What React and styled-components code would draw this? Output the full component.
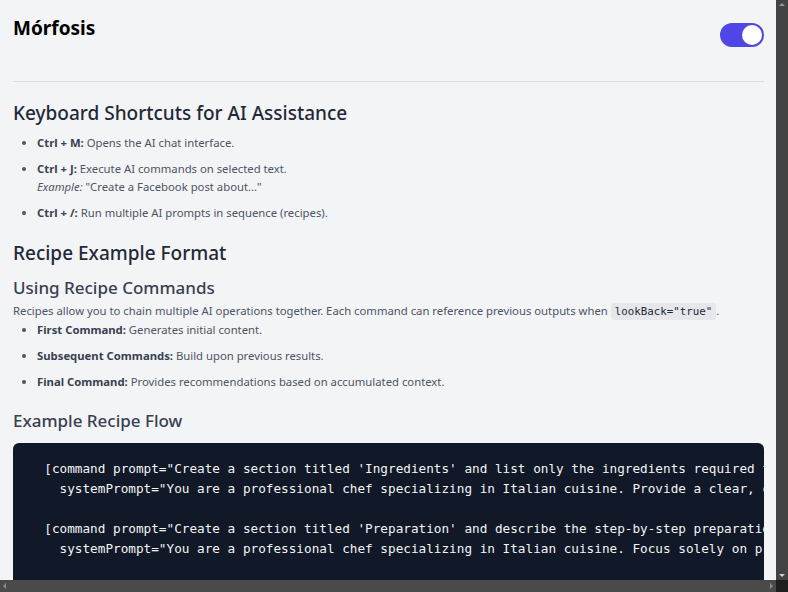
import React, { useState } from "react";
import styled, { createGlobalStyle } from "styled-components";

const GlobalStyle = createGlobalStyle`
  html, body, #root {
    height: 100%;
  }
  body {
    margin: 0;
    background: #f3f4f6;
    font-family: "Noto Sans", "Open Sans", Arial, sans-serif;
    color: #4b5563;
  }
`;

const Shell = styled.div`
  height: 100vh;
  display: grid;
  grid-template-columns: 1fr 12px;
  grid-template-rows: 1fr 12px;
  overflow: hidden;
`;

const Viewport = styled.div`
  overflow: hidden;
  min-width: 0;
  min-height: 0;
`;

const VBar = styled.div`
  background: #434343;
  display: flex;
  flex-direction: column;
  justify-content: space-between;
  align-items: center;
  padding: 3px 0;
`;

const HBar = styled.div`
  background: #4a4a4a;
  display: flex;
  justify-content: space-between;
  align-items: center;
  padding: 0 3px;
`;

const Corner = styled.div`
  background: #1e1e1e;
`;

const Arrow = styled.span`
  width: 0;
  height: 0;
  border: 3px solid transparent;
  ${(p) =>
    p.$dir === "up"
      ? "border-bottom: 3px solid #9a9a9a; border-top-width: 0;"
      : p.$dir === "down"
      ? "border-top: 3px solid #d0d0d0; border-bottom-width: 0;"
      : p.$dir === "left"
      ? "border-right: 3px solid #8a8a8a; border-left-width: 0;"
      : "border-left: 3px solid #8a8a8a; border-right-width: 0;"}
`;

const Page = styled.div`
  padding: 0 12px 24px 13px;
`;

const Header = styled.header`
  display: flex;
  justify-content: space-between;
  align-items: flex-start;
  padding: 14px 0 34px;
  border-bottom: 1px solid #dcdde0;
`;

const Title = styled.h1`
  margin: 0;
  font-size: 19px;
  line-height: 28px;
  font-weight: 700;
  color: #000;
`;

const Switch = styled.button`
  margin-top: 9px;
  width: 44px;
  height: 24px;
  border: none;
  border-radius: 999px;
  padding: 2px;
  background: ${(p) => (p.$on ? "#4f46e5" : "#d1d5db")};
  display: flex;
  justify-content: ${(p) => (p.$on ? "flex-end" : "flex-start")};
  cursor: pointer;
`;

const Knob = styled.span`
  width: 20px;
  height: 20px;
  border-radius: 50%;
  background: #fff;
`;

const H2 = styled.h2`
  margin: ${(p) => p.$top}px 0 0;
  font-size: 19px;
  line-height: 28px;
  font-weight: 500;
  color: #1f2937;
`;

const H3 = styled.h3`
  margin: ${(p) => p.$top}px 0 0;
  font-size: 17px;
  line-height: 24px;
  font-weight: 500;
  color: #374151;
`;

const List = styled.ul`
  margin: ${(p) => p.$top}px 0 0;
  padding-left: 24px;
  font-size: 11.3px;
  line-height: 18px;

  li + li {
    margin-top: 8px;
  }
`;

const Key = styled.strong`
  font-weight: 700;
  color: #374151;
`;

const Note = styled.div`
  em {
    font-style: italic;
  }
`;

const Para = styled.p`
  margin: 2px 0 0;
  font-size: 11.3px;
  line-height: 18px;
`;

const InlineCode = styled.code`
  font-family: "DejaVu Sans Mono", "Liberation Mono", monospace;
  font-size: 10.8px;
  line-height: 1;
  background: #e5e7eb;
  border-radius: 3px;
  padding: 2px 4px;
  color: #1f2937;
`;

const CodeBlock = styled.pre`
  margin: 10px 0 0;
  background: #111827;
  color: #f3f4f6;
  border-radius: 6px;
  padding: 16px;
  overflow: hidden;
  white-space: pre;
  font-family: "DejaVu Sans Mono", "Liberation Mono", monospace;
  font-size: 12.7px;
  line-height: 20px;
`;

const recipe = `  [command prompt="Create a section titled 'Ingredients' and list only the ingredients required for Spaghetti Carbonara."
    systemPrompt="You are a professional chef specializing in Italian cuisine. Provide a clear, concise list of ingredients."]

  [command prompt="Create a section titled 'Preparation' and describe the step-by-step preparation of the dish."
    systemPrompt="You are a professional chef specializing in Italian cuisine. Focus solely on preparation steps." lookBack="true"]

  [command prompt="Create a section titled 'Wine Pairing' and recommend a wine for this dish."
    systemPrompt="You are a sommelier. Base your recommendation on the previous sections." lookBack="true"]`;

export default function App() {
  const [on, setOn] = useState(true);

  return (
    <Shell>
      <GlobalStyle />
      <Viewport>
        <Page>
          <Header>
            <Title>Mórfosis</Title>
            <Switch $on={on} onClick={() => setOn(!on)} aria-label="Toggle">
              <Knob />
            </Switch>
          </Header>

          <H2 $top={17}>Keyboard Shortcuts for AI Assistance</H2>
          <List $top={7}>
            <li>
              <Key>Ctrl + M:</Key> Opens the AI chat interface.
            </li>
            <li>
              <Key>Ctrl + J:</Key> Execute AI commands on selected text.
              <Note>
                <em>Example:</em> "Create a Facebook post about..."
              </Note>
            </li>
            <li>
              <Key>Ctrl + /:</Key> Run multiple AI prompts in sequence (recipes).
            </li>
          </List>

          <H2 $top={17}>Recipe Example Format</H2>
          <H3 $top={9}>Using Recipe Commands</H3>
          <Para>
            Recipes allow you to chain multiple AI operations together. Each
            command can reference previous outputs when{" "}
            <InlineCode>lookBack="true"</InlineCode>.
          </Para>
          <List $top={1}>
            <li>
              <Key>First Command:</Key> Generates initial content.
            </li>
            <li>
              <Key>Subsequent Commands:</Key> Build upon previous results.
            </li>
            <li>
              <Key>Final Command:</Key> Provides recommendations based on
              accumulated context.
            </li>
          </List>

          <H3 $top={18}>Example Recipe Flow</H3>
          <CodeBlock>{recipe}</CodeBlock>
        </Page>
      </Viewport>
      <VBar>
        <Arrow $dir="up" />
        <Arrow $dir="down" />
      </VBar>
      <HBar>
        <Arrow $dir="left" />
        <Arrow $dir="right" />
      </HBar>
      <Corner />
    </Shell>
  );
}
